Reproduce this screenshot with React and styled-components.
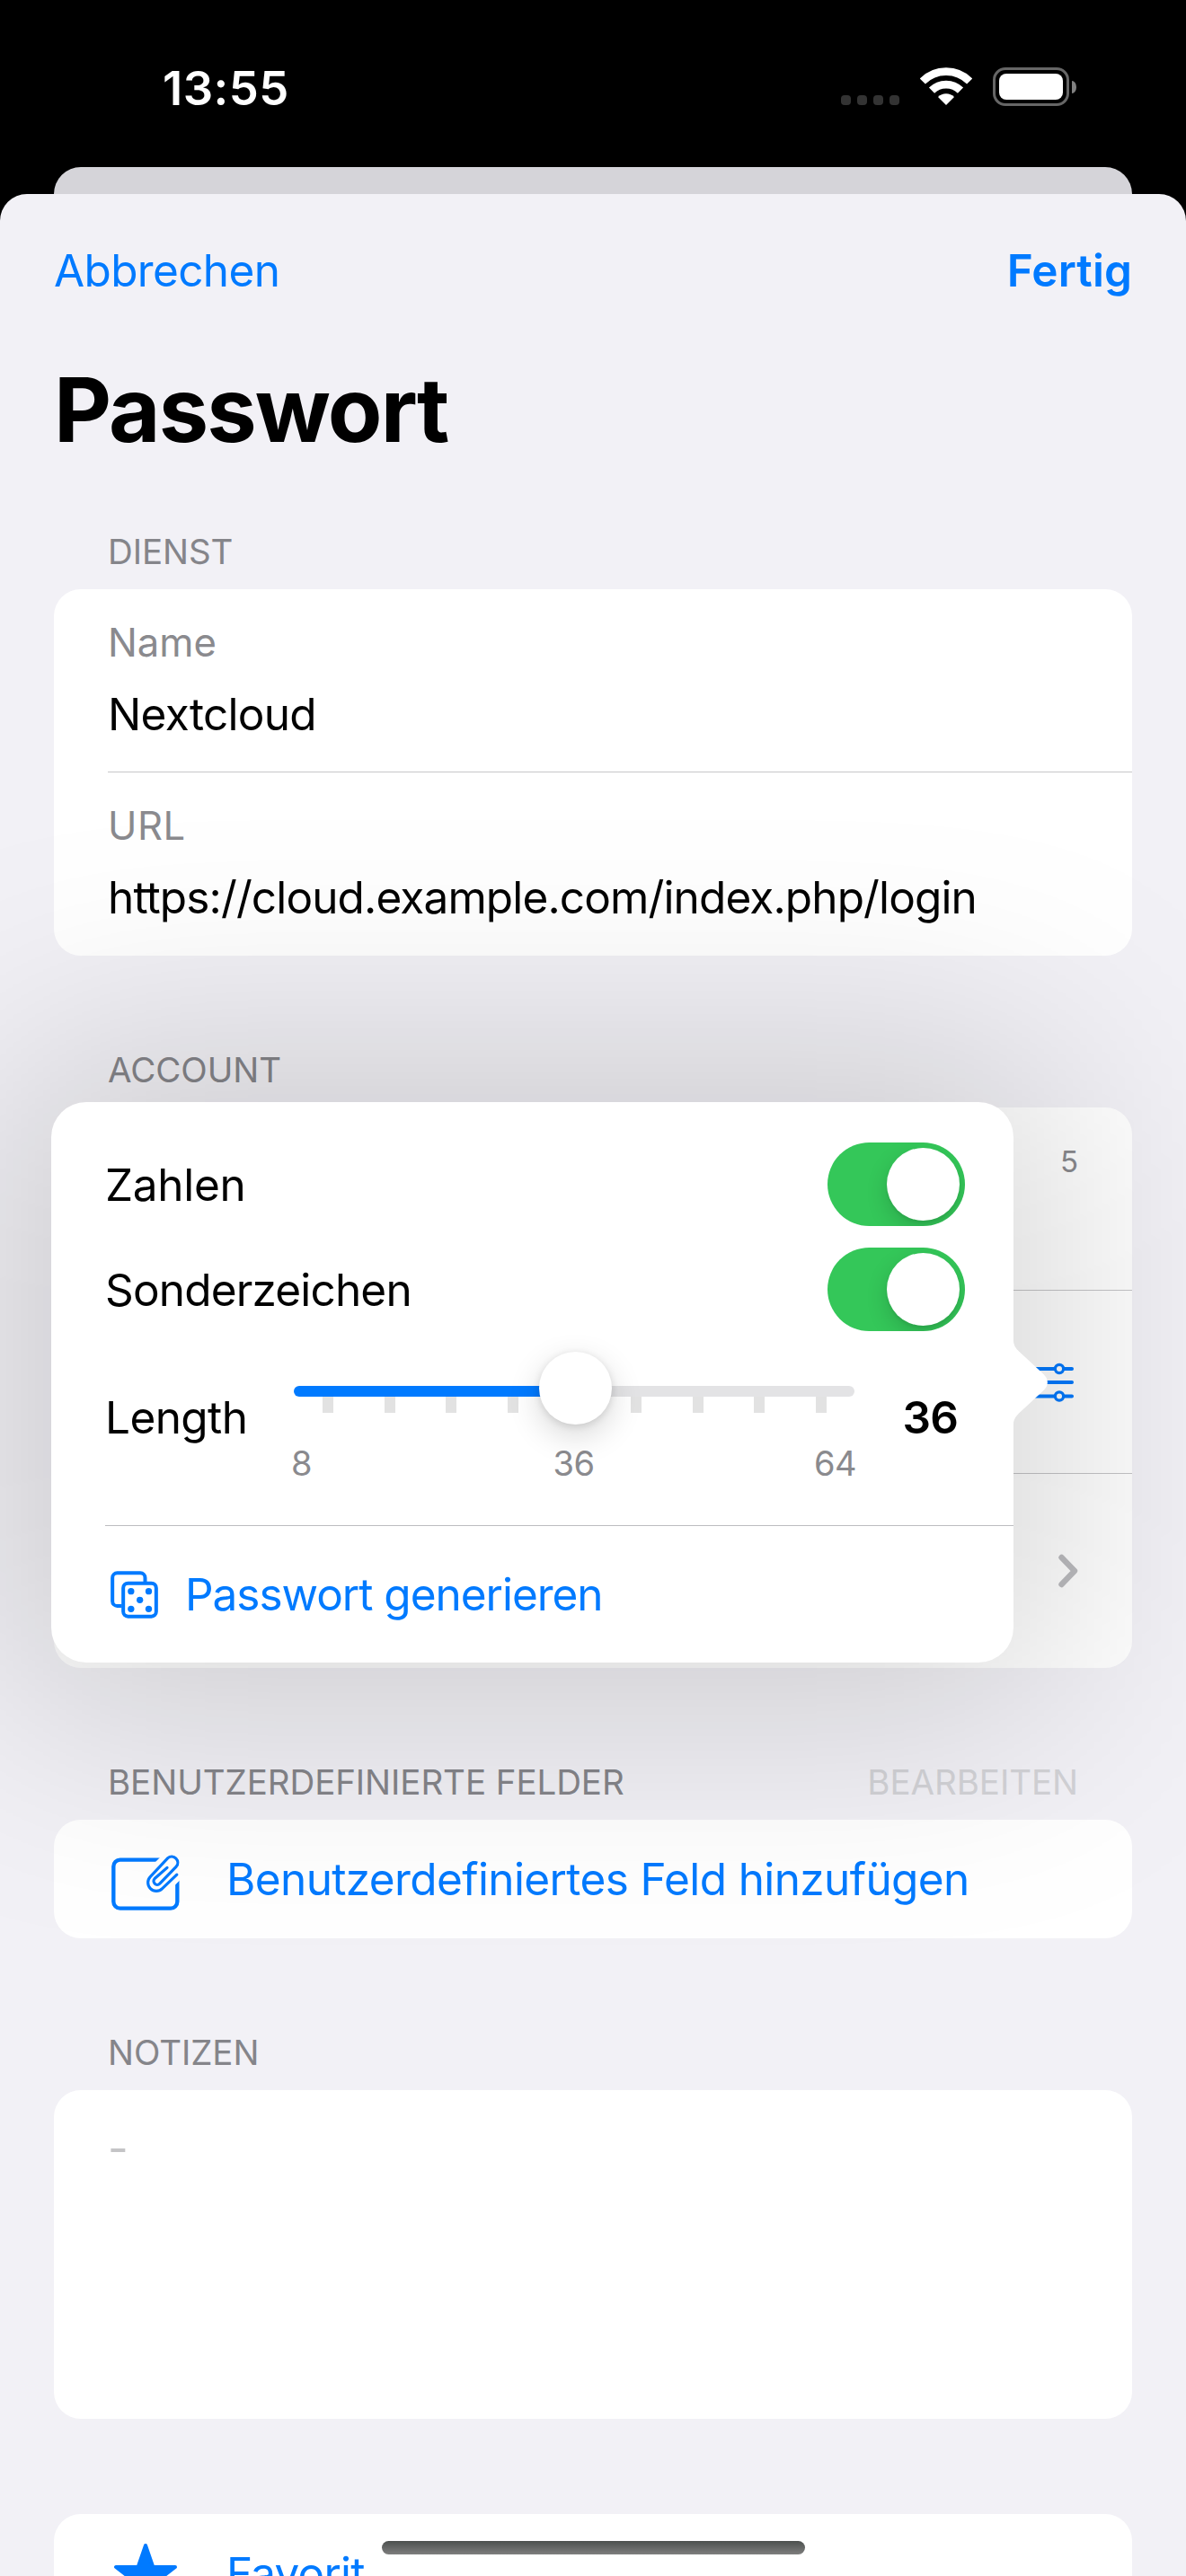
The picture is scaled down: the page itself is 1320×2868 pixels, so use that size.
import React from "react";
import styled, { createGlobalStyle } from "styled-components";

const BLUE = "#007aff";
const GRAY = "#8a8a8e";

const GlobalStyle = createGlobalStyle`
  body { margin: 0; background: #000; }
  * { box-sizing: border-box; }
`;

const Screen = styled.div`
  position: relative;
  display: flex;
  flex-direction: column;
  width: 1320px;
  height: 2868px;
  overflow: hidden;
  background: #000;
  color: #000;
  font-family: Inter, "Liberation Sans", sans-serif;
  font-size: 49.5px;
  line-height: 60px;
`;

const Text = styled.span`
  display: block;
  white-space: nowrap;
  color: ${(p) => p.$color || "inherit"};
  font-size: ${(p) => p.$size || 49.5}px;
  font-weight: ${(p) => p.$weight || 400};
  letter-spacing: ${(p) => p.$track || 0}px;
  line-height: ${(p) => p.$line || 60}px;
`;

const Title = styled.h1`
  margin: 0;
  font-size: 99px;
  font-weight: 700;
  letter-spacing: -1.85px;
  line-height: 140px;
`;

const StatusBar = styled.header`
  display: flex;
  justify-content: space-between;
  align-items: flex-start;
  flex: none;
  height: 186px;
  padding: 68px 122px 0 181px;
`;

const StatusIcons = styled.div`
  display: flex;
  align-items: flex-start;
  padding-top: 7px;
`;

const SignalDots = styled.div`
  display: flex;
  gap: 7px;
  margin: 31px 23px 0 0;
`;

const Dot = styled.i`
  width: 11px;
  height: 11px;
  border-radius: 4px;
  background: #333;
`;

const Battery = styled.div`
  width: 85px;
  height: 43px;
  margin-left: 23px;
  padding: 4px;
  border: 3px solid #666;
  border-radius: 14px;
`;

const BatteryFill = styled.div`
  height: 29px;
  border-radius: 8px;
  background: #fff;
`;

const BatteryCap = styled.div`
  width: 5px;
  height: 14px;
  margin: 15px 0 0 3px;
  border-radius: 0 5px 5px 0 / 0 7px 7px 0;
  background: #808080;
`;

const BackSheet = styled.div`
  flex: none;
  height: 30px;
  margin: 0 60px;
  border-radius: 30px 30px 0 0;
  background: #d5d4d9;
`;

const Sheet = styled.main`
  position: relative;
  flex: 1;
  min-height: 0;
  overflow: hidden;
  padding: 0 60px;
  border-radius: 30px 30px 0 0;
  background: #f2f1f6;
`;

const NavBar = styled.nav`
  display: flex;
  justify-content: space-between;
  align-items: center;
  height: 170px;
  color: ${BLUE};
`;

const SectionHeader = styled.div`
  display: flex;
  justify-content: space-between;
  align-items: flex-end;
  height: ${(p) => p.$height || 169}px;
  padding: 0 60px 12px;
`;

const Card = styled.section`
  height: ${(p) => p.$height}px;
  margin-top: ${(p) => p.$gap || 0}px;
  overflow: hidden;
  border-radius: 30px;
  background: #fff;
`;

const Field = styled.div`
  display: flex;
  flex-direction: column;
  gap: 27px;
  height: 204px;
  margin-left: 60px;
  padding-top: 38px;
  border-bottom: ${(p) => (p.$last ? "none" : "1px solid #c6c6c8")};
`;

const AccountRow = styled.div`
  display: flex;
  justify-content: flex-end;
  align-items: ${(p) => (p.$top ? "flex-start" : "center")};
  height: ${(p) => p.$height || 204}px;
  margin-left: 60px;
  padding: ${(p) => (p.$top ? "30px 60px 0 0" : "0 60px 0 0")};
  border-bottom: ${(p) => (p.$last ? "none" : "1px solid #c6c6c8")};
`;

const ActionRow = styled.div`
  display: flex;
  align-items: center;
  height: 132px;
  padding-left: 64px;
  color: ${BLUE};
`;

const IconSlot = styled.div`
  display: flex;
  align-items: center;
  width: ${(p) => p.$width}px;
  padding-top: ${(p) => p.$drop || 0}px;
  padding-left: ${(p) => p.$inset || 0}px;
`;

const NoteBody = styled.div`
  padding: 34px 60px;
`;

const PopoverShade = styled.div`
  position: absolute;
  left: 7px;
  top: 961px;
  width: 1171px;
  height: 724px;
  border-radius: 60px;
  background: rgba(0, 0, 0, 0.16);
  filter: blur(130px);
`;

const Popover = styled.div`
  position: absolute;
  left: 57px;
  top: 1011px;
  width: 1071px;
  height: 624px;
  padding-top: 33px;
  border-radius: 39px;
  background: #fff;
`;

const Arrow = styled.svg`
  position: absolute;
  left: 1070px;
  top: 260px;
`;

const SwitchRow = styled.div`
  display: flex;
  justify-content: space-between;
  align-items: center;
  height: 117px;
  padding: 0 54px 0 60px;
`;

const Toggle = styled.div`
  display: flex;
  justify-content: flex-end;
  width: 153px;
  height: 93px;
  padding: 6px;
  overflow: hidden;
  border-radius: 47px;
  background: #34c759;
`;

const ToggleKnob = styled.div`
  width: 81px;
  height: 81px;
  border-radius: 50%;
  background: #fff;
  box-shadow: 0 9px 24px rgba(0, 0, 0, 0.16), 0 3px 3px rgba(0, 0, 0, 0.06);
`;

const LengthRow = styled.div`
  display: grid;
  grid-template-columns: 210px 624px 1fr;
  height: 205px;
  margin-left: 60px;
  padding-right: 62px;
  border-bottom: 1px solid #bdbdc0;
`;

const RowLabel = styled.div`
  padding-top: 54px;
  text-align: ${(p) => (p.$end ? "right" : "left")};
`;

const SliderBox = styled.div`
  padding-top: 49px;
`;

const Track = styled.div`
  position: relative;
  height: 12px;
  border-radius: 6px;
  background: linear-gradient(to right, ${BLUE} 50%, #e3e3e5 50%);
`;

const Thumb = styled.div`
  position: absolute;
  left: calc(50% + 1px);
  top: -38px;
  width: 81px;
  height: 81px;
  margin-left: -40px;
  border-radius: 50%;
  background: #fff;
  box-shadow: 0 12px 36px rgba(0, 0, 0, 0.16), 0 2px 8px rgba(0, 0, 0, 0.12);
`;

const Ticks = styled.div`
  display: flex;
  justify-content: space-between;
  padding: 0 31px 0 32px;
`;

const Tick = styled.i`
  width: 12px;
  height: 18px;
  background: #e2e2e2;
`;

const Scale = styled.div`
  display: grid;
  grid-template-columns: 1fr 1fr 1fr;
  margin: 0 -2px 0 -3px;
  padding-top: 31px;
  & > :nth-child(2) { text-align: center; }
  & > :nth-child(3) { text-align: right; }
`;

const GenerateRow = styled.div`
  display: flex;
  align-items: center;
  height: 152px;
  padding-left: 66px;
  color: ${BLUE};
`;

const HomeIndicator = styled.div`
  position: absolute;
  left: 425px;
  top: 2829px;
  width: 471px;
  height: 15px;
  border-radius: 8px;
  background: linear-gradient(#4c504e, #7e7e7e);
`;

const WifiIcon = () => (
  <svg width="58" height="43" viewBox="433 75 174 129" fill="none" stroke="#fff" strokeWidth="26">
    <path d="M441.5 121.5A111 111 0 0 1 598.5 121.5" />
    <path d="M472 152A68 68 0 0 1 568 152" />
    <path d="M520 201L493 174A38 38 0 0 1 547 174Z" fill="#fff" stroke="none" />
  </svg>
);

const SlidersIcon = () => (
  <svg width="60" height="44" viewBox="0 0 60 44" fill="none" stroke={BLUE} strokeWidth="4" strokeLinecap="round">
    <path d="M3 7H53M3 22H53M3 37.5H53" />
    <circle cx="39" cy="7" r="4.6" fill="#fff" strokeWidth="3.2" />
    <circle cx="39" cy="37.5" r="4.6" fill="#fff" strokeWidth="3.2" />
  </svg>
);

const ChevronIcon = () => (
  <svg width="24" height="40" viewBox="0 0 24 40" fill="none" stroke="#bcbcbf" strokeWidth="6.4" strokeLinecap="round" strokeLinejoin="round">
    <path d="M5.500 5L20 20L5.500 35" />
  </svg>
);

const DiceIcon = () => (
  <svg width="53" height="53" viewBox="68.5 85 159 159" fill="none" stroke={BLUE} strokeWidth="12">
    <path d="M184 121V108A16 16 0 0 0 168 92H91A16 16 0 0 0 75 108V186A16 16 0 0 0 91 202H106" />
    <rect x="111" y="126" width="110" height="111" rx="16" />
    <g fill={BLUE} stroke="none">
      <circle cx="137" cy="153" r="11" />
      <circle cx="196" cy="153" r="11" />
      <circle cx="166.5" cy="182" r="11" />
      <circle cx="137" cy="212" r="11" />
      <circle cx="196" cy="212" r="11" />
    </g>
  </svg>
);

const AttachFieldIcon = () => (
  <svg width="77" height="64" viewBox="72 72 231 192" fill="none" stroke={BLUE}>
    <clipPath id="field-frame">
      <polygon points="60,60 258,60 219,99 219,175 286,175 320,140 320,280 60,280" />
    </clipPath>
    <path
      clipPath="url(#field-frame)"
      strokeWidth="13"
      d="M250 92H101A22 22 0 0 0 79 114V232A22 22 0 0 0 101 254H270A22 22 0 0 0 292 232V140"
    />
    <path
      strokeWidth="9.5"
      strokeLinecap="round"
      d="M290.500 141.500L241.800 187.800A28 28 0 0 1 202.200 148.200L260.400 86A20 20 0 0 1 288.600 114.200L233.500 171.500A12 12 0 0 1 216.500 154.500L258 118"
    />
  </svg>
);

const StarIcon = () => (
  <svg width="72" height="70" viewBox="0 0 72 70" fill={BLUE} stroke={BLUE} strokeWidth="4" strokeLinejoin="round">
    <path d="M36 3L44.300 27H69L49.500 42L57 66L36 51.500L15 66L22.500 42L3 27H27.700Z" />
  </svg>
);

const SwitchOn = () => (
  <Toggle>
    <ToggleKnob />
  </Toggle>
);

const FieldItem = ({ label, value, track, labelTrack, last }) => (
  <Field $last={last}>
    <Text $size={43.6} $line={44} $color={GRAY} $track={labelTrack}>{label}</Text>
    <Text $track={track}>{value}</Text>
  </Field>
);

const HeaderText = ({ children, color = "#85858a" }) => (
  <Text $size={38.5} $color={color} $track={-0.07}>{children}</Text>
);

const ScaleText = ({ children }) => (
  <Text $size={38} $line={50} $color={GRAY} $track={-0.6}>{children}</Text>
);

export default function App() {
  return (
    <Screen>
      <GlobalStyle />
      <StatusBar>
        <Text $size={52.5} $weight={600} $color="#fff" $track={0.5}>13:55</Text>
        <StatusIcons>
          <SignalDots>
            <Dot /><Dot /><Dot /><Dot />
          </SignalDots>
          <WifiIcon />
          <Battery><BatteryFill /></Battery>
          <BatteryCap />
        </StatusIcons>
      </StatusBar>
      <BackSheet />
      <Sheet>
        <NavBar>
          <Text $track={-0.65}>Abbrechen</Text>
          <Text $weight={600} $track={0.1}>Fertig</Text>
        </NavBar>
        <Title>Passwort</Title>

        <SectionHeader $height={130}><HeaderText>DIENST</HeaderText></SectionHeader>
        <Card $height={408}>
          <FieldItem label="Name" value="Nextcloud" track={-0.7} />
          <FieldItem label="URL" value="https://cloud.example.com/index.php/login" track={-0.87} labelTrack={0.5} last />
        </Card>

        <SectionHeader><HeaderText>ACCOUNT</HeaderText></SectionHeader>
        <Card $height={624}>
          <AccountRow $top>
            <Text $size={33} $color={GRAY}>5</Text>
          </AccountRow>
          <AccountRow><SlidersIcon /></AccountRow>
          <AccountRow $height={216} $last><ChevronIcon /></AccountRow>
        </Card>

        <SectionHeader>
          <HeaderText>BENUTZERDEFINIERTE FELDER</HeaderText>
          <HeaderText color="#d3d3d7">BEARBEITEN</HeaderText>
        </SectionHeader>
        <Card $height={132}>
          <ActionRow>
            <IconSlot $width={128} $drop={7}><AttachFieldIcon /></IconSlot>
            <Text $track={-0.62}>Benutzerdefiniertes Feld hinzufügen</Text>
          </ActionRow>
        </Card>

        <SectionHeader><HeaderText>NOTIZEN</HeaderText></SectionHeader>
        <Card $height={366}>
          <NoteBody><Text $color="#c4c4c6">-</Text></NoteBody>
        </Card>

        <Card $height={132} $gap={106}>
          <ActionRow>
            <IconSlot $width={128} $drop={2} $inset={1.5}><StarIcon /></IconSlot>
            <Text $track={-0.8}>Favorit</Text>
          </ActionRow>
        </Card>

        <PopoverShade />
        <Popover>
          <Arrow width="40" height="104" viewBox="0 0 40 104">
            <path d="M0 0V104H1V99C1 93 4 89.500 7 86.500L34.500 61C40.300 55.500 40.300 48.500 34.500 43L7 17.500C4 14.500 1 11 1 5V0Z" fill="#fff" />
          </Arrow>
          <SwitchRow><Text $track={-0.3}>Zahlen</Text><SwitchOn /></SwitchRow>
          <SwitchRow><Text $track={-0.83}>Sonderzeichen</Text><SwitchOn /></SwitchRow>
          <LengthRow>
            <RowLabel><Text $track={-0.6}>Length</Text></RowLabel>
            <SliderBox>
              <Track><Thumb /></Track>
              <Ticks>
                {Array.from({ length: 9 }, (_, i) => <Tick key={i} />)}
              </Ticks>
              <Scale>
                <ScaleText>8</ScaleText>
                <ScaleText>36</ScaleText>
                <ScaleText>64</ScaleText>
              </Scale>
            </SliderBox>
            <RowLabel $end><Text $weight={600} $track={-0.8}>36</Text></RowLabel>
          </LengthRow>
          <GenerateRow>
            <IconSlot $width={83}><DiceIcon /></IconSlot>
            <Text $track={-1.02}>Passwort generieren</Text>
          </GenerateRow>
        </Popover>
      </Sheet>
      <HomeIndicator />
    </Screen>
  );
}
